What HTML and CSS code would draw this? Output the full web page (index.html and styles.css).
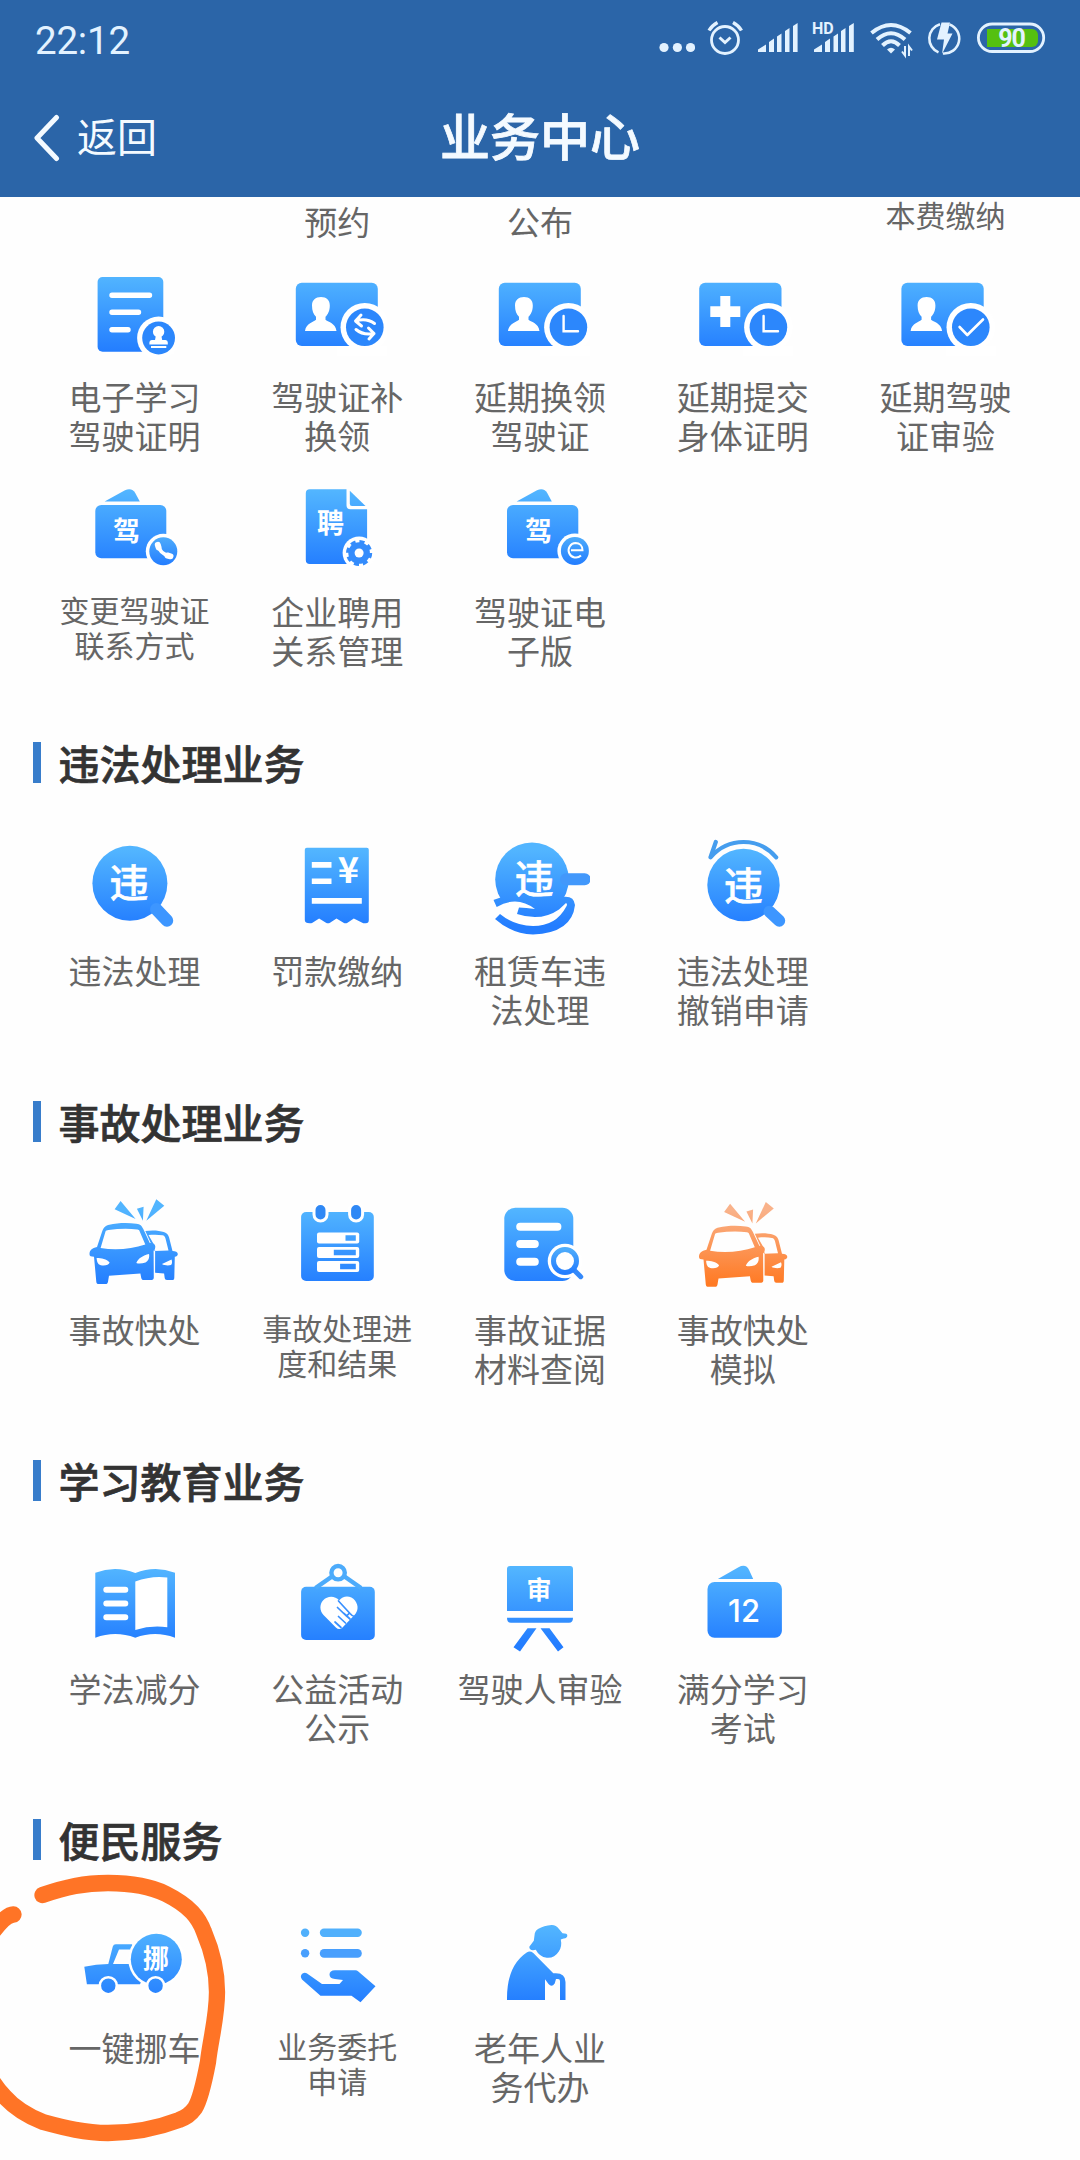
FILE: index.html
```html
<!DOCTYPE html>
<html lang="zh-CN">
<head>
    <meta charset="UTF-8">
    <meta name="viewport" content="width=device-width, initial-scale=1.0">
    <title>业务中心</title>
    <link rel="stylesheet" href="styles.css">
</head>
<body>

    <!-- Shared gradients and shapes -->
    <svg class="defs" width="0" height="0">
        <defs>
            <linearGradient id="blue" gradientUnits="userSpaceOnUse" x1="0" y1="12" x2="0" y2="88">
                <stop offset="0" stop-color="#52b5ff"/>
                <stop offset="1" stop-color="#237dff"/>
            </linearGradient>
            <linearGradient id="orange" gradientUnits="userSpaceOnUse" x1="0" y1="10" x2="0" y2="84">
                <stop offset="0" stop-color="#f9b28a"/>
                <stop offset="1" stop-color="#ff7a24"/>
            </linearGradient>
            <linearGradient id="badge" x1="0" y1="0" x2="0" y2="1">
                <stop offset="0" stop-color="#4dabfb"/>
                <stop offset="1" stop-color="#237dff"/>
            </linearGradient>
            <g id="person">
                <path fill="#fff" d="M34 33c5.500 0 8.800 3 8.800 8.500 0 5.500-2 9-4.300 11.300v3c2 2.200 10 3 11 11.200H18c1-8 9-9 11-11.200v-3c-2.500-2.300-4-6-4-11.300 0-5.500 3.500-8.500 9-8.500z"/>
            </g>
            <g id="crash">
                <path d="M36.600 4l-6 8.300 21 9.700zM52.900 11.700l6.700-2-.7 14zM72.300 2.300l8 6.400-18 15z"/>
                <path fill-rule="evenodd" d="M61.300 34c7-1 14-.5 18.500 1 3.500 1 4.500 3 5.300 5.500L88.500 54c3 0 5.300 1 5.300 3 0 1.500-1 2.500-3 2.700l-.5 21c0 1.500-.7 2.300-2 2.300h-5.300c-1.500 0-2-.7-2.300-2l-.6-4.500-9-.8V53l-3-4zM64.500 38l6 10.500V54l14-.5-3-12c-.5-2-1.500-3-3-3.200-4-.8-9-.8-14-.3zM78 67l9.500-4.500c1 2 .5 4.500-.5 5.500-2.500.8-7 .5-9-1z"/>
                <path fill-rule="evenodd" d="M18.300 34c1.500-4 3.500-5.500 7-6.300 8-1.800 18-2 27-1 4 .5 5.500 2 7 5.300l6.500 14c3 0 5.500 1 5.500 3.500 0 1.500-.5 3.500-1.700 4.300l.2 26.700c0 1.500-.8 2.500-2 2.500h-8c-1.500 0-2.300-.8-2.600-2.300l-.8-4.200L25 78.700l-1 6c-.3 1.600-1 2.300-2.300 2.300h-7c-1.500 0-2.300-.7-2.400-2.300L10 59.700c-3 0-4.500-.7-4.500-2.500 0-4 2.500-6 7.500-7.200zM21.500 34.500L16.600 51c15 2.500 31 1 44.700-3.500L55.500 34c-.4-1-1-1.300-2-1.500-9-1-19-.8-29 .5-1.700.2-2.500.5-3 1.500zM12.600 61c5 0 10 1 13 4.500-.5 2-3 3-6 3-4 0-6.500-1-7-7.500zM52.300 66c2-5 7-7.500 12.700-9 .7 4-.5 7-3.500 8.500-3.500 1.200-7 1.500-9.200.5z"/>
            </g>
        </defs>
    </svg>

    <header class="header">
        <div class="status-bar">
            <span class="time">22:12</span>
            <div class="status-icons">
                <svg width="36" height="40" viewBox="0 0 36 40"><g fill="#e3f2ff"><circle cx="5" cy="28.500" r="4.600"/><circle cx="18.400" cy="28.500" r="4.600"/><circle cx="31.500" cy="28.500" r="4.600"/></g></svg>
                <svg class="gap-s" width="38" height="40" viewBox="0 0 38 40"><g fill="none" stroke="#e3f2ff" stroke-width="2.800"><circle cx="19" cy="21" r="13.500"/><path d="M13.500 18.500l5.500 5 5.500-5" stroke-width="3"/><path d="M3 11.500Q6 6.500 11.500 3.500M27 3.500Q32.500 6.500 35.500 11.500" stroke-width="3.400"/></g></svg>
                <svg class="gap-m" width="42" height="40" viewBox="0 0 42 40"><path fill="#e3f2ff" d="M1 33v-2.500l8-5V33zM12 33V23l5-3.500V33zM20 33V17.500l4.500-3V33zM28 33V12l4.500-3v24zM36 33V7l4.600-3v29z"/></svg>
                <svg class="gap-m" width="43" height="40" viewBox="0 0 43 40"><path fill="#e3f2ff" d="M2 33v-2.500l8-5V33zM13 33V23l5-3.500V33zM21.500 33V17.500l4.500-3V33zM29 33V12l4.500-3v24zM37 33V7l4.800-3v29z"/><text class="hd" x="0" y="14.500">HD</text></svg>
                <svg class="gap-l" width="44" height="40" viewBox="0 0 44 40"><g fill="none" stroke="#e3f2ff" stroke-width="4"><path d="M2.500 14Q22-2 41.500 14"/><path d="M8 20.500Q22 8 36 20.500"/><path d="M13.500 26.500Q22 18 30.500 26.500"/></g><path fill="#e3f2ff" d="M18 30.500q4-3.500 8 0l-4 4z"/><path fill="none" stroke="#e3f2ff" stroke-width="2" d="M36 27v9.500l-3-4M40 37v-9.500l3 4"/></svg>
                <svg class="gap-l" width="35" height="40" viewBox="0 0 35 40"><g fill="none" stroke="#e3f2ff" stroke-width="2.600"><path d="M13 5.200a15 15 0 0 0-1.500 28.200M22.500 5.500a15 15 0 0 1-6.500 29"/></g><path fill="#e3f2ff" d="M14.500 3.500h8.500l-2.500 11h5L15 35l2-14.500h-7z"/></svg>
                <svg class="gap-l" width="70" height="40" viewBox="0 0 70 40"><rect x="2.400" y="5" width="65.300" height="27.500" rx="13.750" fill="none" stroke="#e3f2ff" stroke-width="2.800"/><rect x="11" y="10" width="51" height="18" rx="6" fill="#55c010"/><path fill="#55c010" d="M11 10h12v18H11z"/><text class="battery" x="35.500" y="28">90</text></svg>
            </div>
        </div>
        <div class="nav">
            <a class="back">
                <svg width="28" height="50" viewBox="0 0 28 50"><path d="M24.500 4.500L5 25l19.500 20.500" fill="none" stroke="#f4faff" stroke-width="5" stroke-linecap="round" stroke-linejoin="round"/></svg>
                <span>返回</span>
            </a>
            <h1 class="title">业务中心</h1>
        </div>
    </header>

    <main class="content">

        <!-- 上一行滚动后剩余的文字 -->
        <div class="grid cut">
            <p class="label one"></p>
            <p class="label one">预约</p>
            <p class="label one">公布</p>
            <p class="label one"></p>
            <p class="label one small">本费缴纳</p>
        </div>

        <div class="grid">
            <div class="item">
                <svg class="icon" viewBox="0 0 100 100" fill="url(#blue)">
                    <rect x="13.600" y="13" width="65.700" height="74.700" rx="5"/>
                    <g stroke="#fff" stroke-width="5.400" stroke-linecap="round"><path d="M28 31.300h37.500M28 48.300h26.500M28 65.700h16"/></g>
                    <circle cx="74.600" cy="74" r="21.500" fill="#fff"/>
                    <circle cx="74.600" cy="74" r="16.400" fill="#2c87fc"/>
                    <g fill="#fff"><circle cx="74.600" cy="67.800" r="5.700"/><path d="M72 71h5.200l1 5h3.300q2.300 0 2.300 2.500V80.500H65.400V78.500q0-2.500 2.300-2.500h3.300z"/><rect x="67" y="82" width="15.300" height="2"/></g>
                </svg>
                <p class="label">电子学习<br>驾驶证明</p>
            </div>
            <div class="item">
                <svg class="icon" viewBox="0 0 100 100" fill="url(#blue)">
                    <rect x="8.800" y="18.700" width="82" height="63.300" rx="6"/>
                    <use href="#person"/>
                    <circle cx="77.800" cy="63.300" r="24.300" fill="#fff"/>
                    <path fill="#fff" d="M50 82.200h50v10H50z"/>
                    <circle cx="77.800" cy="63.300" r="18.800" fill="#2c87fc"/>
                    <path d="M74 51l-5.500 6 6 5M69 56.700q11-3 18.500 2.800M82 75l5-5.500-5.500-5.500M87 69.500q-11 2-18-4" fill="none" stroke="#fff" stroke-width="3" stroke-linecap="round" stroke-linejoin="round"/>
                </svg>
                <p class="label">驾驶证补<br>换领</p>
            </div>
            <div class="item">
                <svg class="icon" viewBox="0 0 100 100" fill="url(#blue)">
                    <rect x="8.800" y="18.700" width="82" height="63.300" rx="6"/>
                    <use href="#person"/>
                    <circle cx="78.400" cy="63.300" r="24.300" fill="#fff"/>
                    <path fill="#fff" d="M50 82.200h50v10H50z"/>
                    <circle cx="78.400" cy="63.300" r="18.800" fill="#2c87fc"/>
                    <path d="M73.600 52v15.300H88" fill="none" stroke="#fff" stroke-width="2.400" stroke-linecap="round"/>
                </svg>
                <p class="label">延期换领<br>驾驶证</p>
            </div>
            <div class="item">
                <svg class="icon" viewBox="0 0 100 100" fill="url(#blue)">
                    <rect x="6.200" y="18.700" width="82.300" height="63.300" rx="6"/>
                    <path fill="#fff" d="M27.300 32h10v10.300h10V53h-10v10h-10V53h-10V42.300h10z"/>
                    <circle cx="75.400" cy="63.300" r="24.300" fill="#fff"/>
                    <path fill="#fff" d="M50 82.200h50v10H50z"/>
                    <circle cx="75.400" cy="63.300" r="18.800" fill="#2c87fc"/>
                    <path d="M70.600 52v15.300H85" fill="none" stroke="#fff" stroke-width="2.400" stroke-linecap="round"/>
                </svg>
                <p class="label">延期提交<br>身体证明</p>
            </div>
            <div class="item">
                <svg class="icon" viewBox="0 0 100 100" fill="url(#blue)">
                    <rect x="5.400" y="18.700" width="82.300" height="63.300" rx="6"/>
                    <use href="#person" x="-3.400"/>
                    <circle cx="74.800" cy="63.300" r="24.300" fill="#fff"/>
                    <path fill="#fff" d="M50 82.200h50v10H50z"/>
                    <circle cx="74.800" cy="63.300" r="18.800" fill="#2c87fc"/>
                    <path d="M63.600 63l7.700 8L87 55.500" fill="none" stroke="#fff" stroke-width="2.600" stroke-linecap="round" stroke-linejoin="round"/>
                </svg>
                <p class="label">延期驾驶<br>证审验</p>
            </div>
        </div>

        <div class="grid">
            <div class="item">
                <svg class="icon" viewBox="0 0 100 100" fill="url(#blue)">
                    <path d="M20.600 22.500L41 11.300q7-3 10.500 3.200l4.300 8z"/>
                    <rect x="11.300" y="26" width="71" height="53.300" rx="6"/>
                    <text class="icon-text t27" x="42.600" y="62">驾</text>
                    <circle cx="79.300" cy="72.300" r="17.500" fill="#fff"/>
                    <circle cx="79.300" cy="72.300" r="14" fill="url(#badge)"/>
                    <path d="M74.500 66.500q1 8 11 10.500" fill="none" stroke="#fff" stroke-width="3.600"/>
                    <path d="M73.800 65.800l.8 2.700M83.500 76.500l3 .8" stroke="#fff" stroke-width="6" stroke-linecap="round"/>
                </svg>
                <p class="label small">变更驾驶证<br>联系方式</p>
            </div>
            <div class="item">
                <svg class="icon" viewBox="0 0 100 100" fill="url(#blue)">
                    <path d="M22.800 10.300h36.700v16q0 4 4 4h16.600V85H22.800q-4 0-4-4V14.300q0-4 4-4z"/>
                    <path d="M62.800 11.700L78.500 27H65q-2.200 0-2.200-2.200z"/>
                    <text class="icon-text t27" x="43.500" y="54.300">聘</text>
                    <circle cx="72.100" cy="74" r="16.500" fill="#fff"/>
                    <circle cx="72.100" cy="74" r="10.800" fill="#348cfc"/>
                    <circle cx="72.100" cy="74" r="11.300" fill="none" stroke="#348cfc" stroke-width="3.600" stroke-dasharray="5 3.875"/>
                    <circle cx="72.100" cy="74" r="4.500" fill="#fff"/>
                </svg>
                <p class="label">企业聘用<br>关系管理</p>
            </div>
            <div class="item">
                <svg class="icon" viewBox="0 0 100 100" fill="url(#blue)">
                    <path d="M26.600 22.500L47 11.300q7-3 10.500 3.200l4.300 8z"/>
                    <rect x="17" y="26" width="71.300" height="53.300" rx="6"/>
                    <text class="icon-text t27" x="48.400" y="62">驾</text>
                    <circle cx="84.900" cy="72" r="17.500" fill="#fff"/>
                    <circle cx="84.900" cy="72" r="14" fill="url(#badge)"/>
                    <path d="M81 71.300h11.500c0-4.500-3-7.300-7-7.300a7.300 7.300 0 1 0 5.500 12.500" fill="none" stroke="#fff" stroke-width="2"/>
                </svg>
                <p class="label">驾驶证电<br>子版</p>
            </div>
        </div>

        <h2 class="section-title">违法处理业务</h2>
        <div class="grid">
            <div class="item">
                <svg class="icon" viewBox="0 0 100 100" fill="url(#blue)">
                    <circle cx="45.900" cy="45.300" r="37.500"/>
                    <path d="M72.300 71.300L83 82.500" stroke="#3d96ff" stroke-width="12.500" stroke-linecap="round"/>
                    <text class="icon-text t39" x="45" y="59">违</text>
                </svg>
                <p class="label">违法处理</p>
            </div>
            <div class="item">
                <svg class="icon" viewBox="0 0 100 100" fill="url(#blue)">
                    <path d="M19.800 9.700h60q2 0 2 2V82q0 3.300-3 3.300h-2.500L66.800 80.500l-6.300 4.300q-2 1-4 0L49.500 80.500l-6.500 4.300q-2 1-4 0L32.100 80.500l-6.600 4.300q-1 .5-2.700.5-5 0-5-3.300V11.700q0-2 2-2z"/>
                    <path fill="#fff" d="M24.800 24h19.700v5.700H24.800zM24.800 40.500h19.700v5.500H24.800zM24.800 60h50v5.700h-50z"/>
                    <text class="icon-text t36" x="61.300" y="44.500">¥</text>
                </svg>
                <p class="label">罚款缴纳</p>
            </div>
            <div class="item">
                <svg class="icon" viewBox="0 0 100 100" fill="url(#blue)">
                    <circle cx="42" cy="41.300" r="36.800"/>
                    <path d="M76 41.200H94.700" stroke="#4298fb" stroke-width="12" stroke-linecap="round"/>
                    <path d="M3.300 62L12 59l60 0q12-2 13 8-3 28-42 29.500Q22 96 5 81z"/>
                    <path fill="#fff" d="M0 64l3.500-2 3.200 7Q27 57 45 71q-9-1.500-16-1.500l-2 6.500q24 8 42-4.500l7-6.500q2 1 0 4Q66 88 43 88 24 87.500 10 76l-5.500 5.500L0 82z"/>
                    <text class="icon-text t39" x="44.300" y="55">违</text>
                </svg>
                <p class="label">租赁车违<br>法处理</p>
            </div>
            <div class="item">
                <svg class="icon" viewBox="0 0 100 100" fill="url(#blue)">
                    <circle cx="50.500" cy="47" r="36.200"/>
                    <path d="M76.500 73.700l9.700 9" stroke="#3d96ff" stroke-width="12" stroke-linecap="round"/>
                    <path d="M22.800 4l-5.300 15.300Q31 4 50.500 4T83.200 19.300" fill="none" stroke="#459dee" stroke-width="4.200" stroke-linecap="round" stroke-linejoin="round"/>
                    <text class="icon-text t39" x="50.500" y="62">违</text>
                </svg>
                <p class="label">违法处理<br>撤销申请</p>
            </div>
        </div>

        <h2 class="section-title">事故处理业务</h2>
        <div class="grid">
            <div class="item">
                <svg class="icon" viewBox="0 0 100 100" fill="url(#blue)">
                    <use href="#crash"/>
                </svg>
                <p class="label">事故快处</p>
            </div>
            <div class="item">
                <svg class="icon" viewBox="0 0 100 100" fill="url(#blue)">
                    <rect x="14.100" y="15" width="72.700" height="69" rx="5"/>
                    <g stroke="#fff" stroke-width="3"><rect x="27" y="6.500" width="13" height="17.500" rx="6.500" fill="#2f88f5"/><rect x="62.600" y="6.500" width="13" height="17.500" rx="6.500" fill="#2f88f5"/></g>
                    <g fill="#fff"><rect x="30" y="35.500" width="42.200" height="11" rx="2"/><rect x="30" y="50" width="42.200" height="11" rx="2"/><rect x="30" y="64" width="42.200" height="11" rx="2"/></g>
                    <path d="M58.500 38.300h10.300v5.400H58.500zM46.800 52.800h22v5.400h-22zM53.100 66.800h15.700v5.400H53.100z"/>
                </svg>
                <p class="label small">事故处理进<br>度和结果</p>
            </div>
            <div class="item">
                <svg class="icon" viewBox="0 0 100 100" fill="url(#blue)">
                    <rect x="14.300" y="10.700" width="69" height="73.300" rx="11"/>
                    <path d="M30.200 29.700h37.200M30.200 47h14.600M30.200 64.700h14.600" stroke="#fff" stroke-width="8" stroke-linecap="round"/>
                    <circle cx="75" cy="64" r="17.300" fill="#fff"/>
                    <path d="M84.500 73.500l6.200 6.200" stroke="#fff" stroke-width="10"/>
                    <path d="M84.500 73.500l6.200 6.200" stroke="#3489fa" stroke-width="5" stroke-linecap="round"/>
                    <circle cx="75" cy="64" r="11.500" fill="#fff" stroke="url(#badge)" stroke-width="5"/>
                </svg>
                <p class="label">事故证据<br>材料查阅</p>
            </div>
            <div class="item">
                <svg class="icon" viewBox="0 0 100 100" fill="url(#orange)">
                    <use href="#crash" x="0.500" y="2.700"/>
                </svg>
                <p class="label">事故快处<br>模拟</p>
            </div>
        </div>

        <h2 class="section-title">学习教育业务</h2>
        <div class="grid">
            <div class="item">
                <svg class="icon" viewBox="0 0 100 100" fill="url(#blue)">
                    <path d="M11.300 16.700q20-7.500 40 .3 20-7.800 39.700-.3v65q-20-7.500-39.700 0-20-7.500-40 0z"/>
                    <path fill="#fff" d="M51.300 25.500q16-6 32-4v49.800q-16-2.300-32 2.700z"/>
                    <path d="M22.300 33.700h19M22.300 47.500h19M22.300 61.300h19" stroke="#fff" stroke-width="6" stroke-linecap="round"/>
                </svg>
                <p class="label">学法减分</p>
            </div>
            <div class="item">
                <svg class="icon" viewBox="0 0 100 100" fill="url(#blue)">
                    <rect x="14.100" y="30.700" width="73.700" height="53.300" rx="5"/>
                    <path d="M45 20.500L28.500 32M57.500 20.500L74 32" stroke="#4cabfb" stroke-width="4.500"/>
                    <circle cx="51.100" cy="16.700" r="6.700" fill="none" stroke="#4cabfb" stroke-width="4.400"/>
                    <path fill="#fff" d="M52.200 44.500c4-5.500 12-5 15.800 0 3.800 5.300 3.200 10.500-.5 14.500L55.500 71.500q-3.300 3-6.600 0L36.500 59c-4-4.500-4-10.500-.5-14.500 4.500-5 12-5 16.200 0z"/>
                    <path d="M51.500 45l11 12-3 3-9-8.500M62.500 57q2.500 3 5 3.500M58.500 67l-7-6.500M54 71.500l-6-5.500M63 63l-6-5.500" fill="none" stroke="#3990ff" stroke-width="1.700" stroke-linecap="round"/>
                </svg>
                <p class="label">公益活动<br>公示</p>
            </div>
            <div class="item">
                <svg class="icon" viewBox="0 0 100 100" fill="url(#blue)">
                    <path d="M20 10h60q3 0 3 3v42H17V13q0-3 3-3zM17 61.700h66q0 5-4 5H21q-4 0-4-5zM37.500 72.300h9L30 95.500l-6.500-4.200zM50.500 72.300h9L73.500 91.300l-5.500 4.200z"/>
                    <text class="icon-text t25" x="49" y="43">审</text>
                </svg>
                <p class="label">驾驶人审验</p>
            </div>
            <div class="item">
                <svg class="icon" viewBox="0 0 100 100" fill="url(#blue)">
                    <path d="M24.900 23L45.500 11.300q7.500-4 10.700 3l4 8.700z"/>
                    <rect x="14.500" y="26" width="74.400" height="55.700" rx="7"/>
                    <text class="icon-text num" x="51" y="66">12</text>
                </svg>
                <p class="label">满分学习<br>考试</p>
            </div>
        </div>

        <h2 class="section-title">便民服务</h2>
        <div class="grid">
            <div class="item">
                <svg class="icon" viewBox="0 0 100 100" fill="url(#blue)">
                    <path fill-rule="evenodd" d="M.3 51.700Q12 49.300 24.300 49l4.500-17.500q.6-2.200 3-2.200H48L60 60l-4 9.300H2.900zM35 34.500L29 49h17V34.500z"/>
                    <circle cx="72.300" cy="44.300" r="28" fill="#fff"/>
                    <circle cx="72.300" cy="44.300" r="25.500"/>
                    <g stroke="#fff" stroke-width="2.600"><circle cx="24.300" cy="70.700" r="8.500"/><circle cx="71.600" cy="70.700" r="8.500"/></g>
                    <text class="icon-text t26" x="72" y="53">挪</text>
                </svg>
                <p class="label">一键挪车</p>
            </div>
            <div class="item">
                <svg class="icon" viewBox="0 0 100 100" fill="url(#blue)">
                    <g fill="#50b0fc"><circle cx="18.100" cy="17.700" r="4.200"/><rect x="32.800" y="13.500" width="42" height="8.500" rx="4.200"/></g>
                    <g fill="#489ffd"><circle cx="18.100" cy="38.300" r="4.200"/><rect x="32.800" y="34" width="42" height="8.700" rx="4.300"/></g>
                    <path d="M15 64.500q-2.500-3.500.5-6 3-2 6 1L35 69h17.500l3.500-4-8-1q-5.500-.5-5.500-4.500 0-4 5.500-4.200h20.500q1.500 0 2.500 1l17.500 15L73.500 87.300 64.500 80.700H33.500z"/>
                </svg>
                <p class="label small">业务委托<br>申请</p>
            </div>
            <div class="item">
                <svg class="icon" viewBox="0 0 100 100" fill="url(#blue)">
                    <path d="M39.300 31.700l4.500-6 1-7.500q.7-3 3.200-4.200Q54 10.500 61.500 10q4.500-.2 7.500 4l3.500 4.200q5 0 4.800 2.300 0 2.500-3.500 3-2 .7-3 1 1.500 7-2 12-4.500 7-12 6.300-7.500-1-11-8-6.500 1.500-6.500-3.100z"/>
                    <path d="M17 85Q16.500 51 36.700 37.500q3.300-2 6.600.5L63.300 58.300Q75.300 57 75.500 67v18H70V66q0-2-2-2h-2l-1.300 4.500q-3 4.300-6.200.5L55 64.300V85z"/>
                </svg>
                <p class="label">老年人业<br>务代办</p>
            </div>
        </div>
    </main>

    <!-- Hand drawn marker -->
    <svg class="marker" width="240" height="300" viewBox="0 0 240 300">
        <g fill="none" stroke="#ff7426" stroke-width="16.300" stroke-linecap="round" stroke-linejoin="round">
            <path d="M42.500 35C66 27 84 23 108 23c26 0 44 4 58 11 24 12 33 24 38 38 9 21 13 38 13 60 0 26-7 50-9 70-4 21-8 38-13 46-5 7-9 9-16 12-21 8-47 13-71 13-23 0-43-5-65-11Q18 252 4 236-6 226-14 210"/>
            <path d="M13.500 54.500Q5 55-8 73"/>
        </g>
    </svg>

</body>
</html>
```
FILE: styles.css
```css
* {
    box-sizing: border-box;
}

body {
    position: relative;
    width: 1080px;
    height: 2160px;
    margin: 0;
    overflow: hidden;
    background: #fefefe;
    color: #666;
    font-family: "Noto Sans CJK SC", sans-serif;
}

.defs {
    position: absolute;
}

/* Header */
.header {
    height: 197px;
    background: #2b65a8;
    color: #f4faff;
}

.status-bar {
    display: flex;
    justify-content: space-between;
    height: 78px;
    padding: 19px 34px 0 35px;
}

.time {
    font-family: Roboto, sans-serif;
    font-size: 38.5px;
    line-height: 43px;
    letter-spacing: -0.2px;
    color: #e3f2ff;
}

.status-icons {
    display: flex;
}

.gap-s {
    margin-left: 11px;
}

.gap-m {
    margin-left: 13px;
}

.gap-l {
    margin-left: 14px;
}

.hd {
    font: 700 16px Roboto, sans-serif;
    fill: #e3f2ff;
}

.battery {
    font: 700 25px Roboto, sans-serif;
    letter-spacing: -1px;
    fill: #e3f2ff;
    text-anchor: middle;
}

.nav {
    display: grid;
    grid-template-columns: 1fr auto 1fr;
    align-items: center;
    height: 119px;
    padding: 0 32px;
}

.back {
    display: flex;
    align-items: center;
    gap: 17px;
    font-size: 40px;
    line-height: 50px;
}

.back span {
    padding-bottom: 5px;
}

.title {
    margin: 0;
    padding-bottom: 7px;
    font-size: 50px;
    line-height: 60px;
    font-weight: 500;
    -webkit-text-stroke: 0.8px #f4faff;
}

/* Business list */
.content {
    padding: 0 33px;
}

.grid {
    display: grid;
    grid-template-columns: repeat(5, 1fr);
    margin-bottom: 23px;
}

.cut {
    align-items: end;
    height: 44px;
}

.item {
    display: flex;
    flex-direction: column;
    align-items: center;
}

.icon {
    display: block;
    width: 100px;
    height: 100px;
    margin-bottom: 12.5px;
}

.label {
    height: 79.5px;
    margin: 0;
    font-size: 33px;
    line-height: 39px;
    text-align: center;
    white-space: nowrap;
}

.label.small {
    font-size: 30px;
    line-height: 35.4px;
}

.label.one {
    height: 40.5px;
}

.label.one.small {
    height: 45px;
}

.section-title {
    margin: 71px 0 55px;
    padding-left: 17.5px;
    border-left: 8px solid #387dcb;
    color: #333;
    font-size: 41px;
    line-height: 40px;
    height: 41px;
    font-weight: 500;
    -webkit-text-stroke: 0.7px #333;
}

.grid:has(+ .section-title) {
    margin-bottom: 0;
}

/* Characters inside icons */
.icon-text {
    fill: #fff;
    font-weight: 700;
    text-anchor: middle;
}

.t25 {
    font-size: 25px;
}

.t26 {
    font-size: 26px;
}

.t27 {
    font-size: 27px;
}

.t36 {
    font-size: 36px;
}

.t39 {
    font-size: 39px;
    font-weight: 500;
    stroke: #fff;
    stroke-width: 0.6px;
}

.num {
    font-family: Inter, sans-serif;
    font-size: 31px;
    font-weight: 500;
}

.marker {
    position: absolute;
    left: 0;
    top: 1860px;
}
```
